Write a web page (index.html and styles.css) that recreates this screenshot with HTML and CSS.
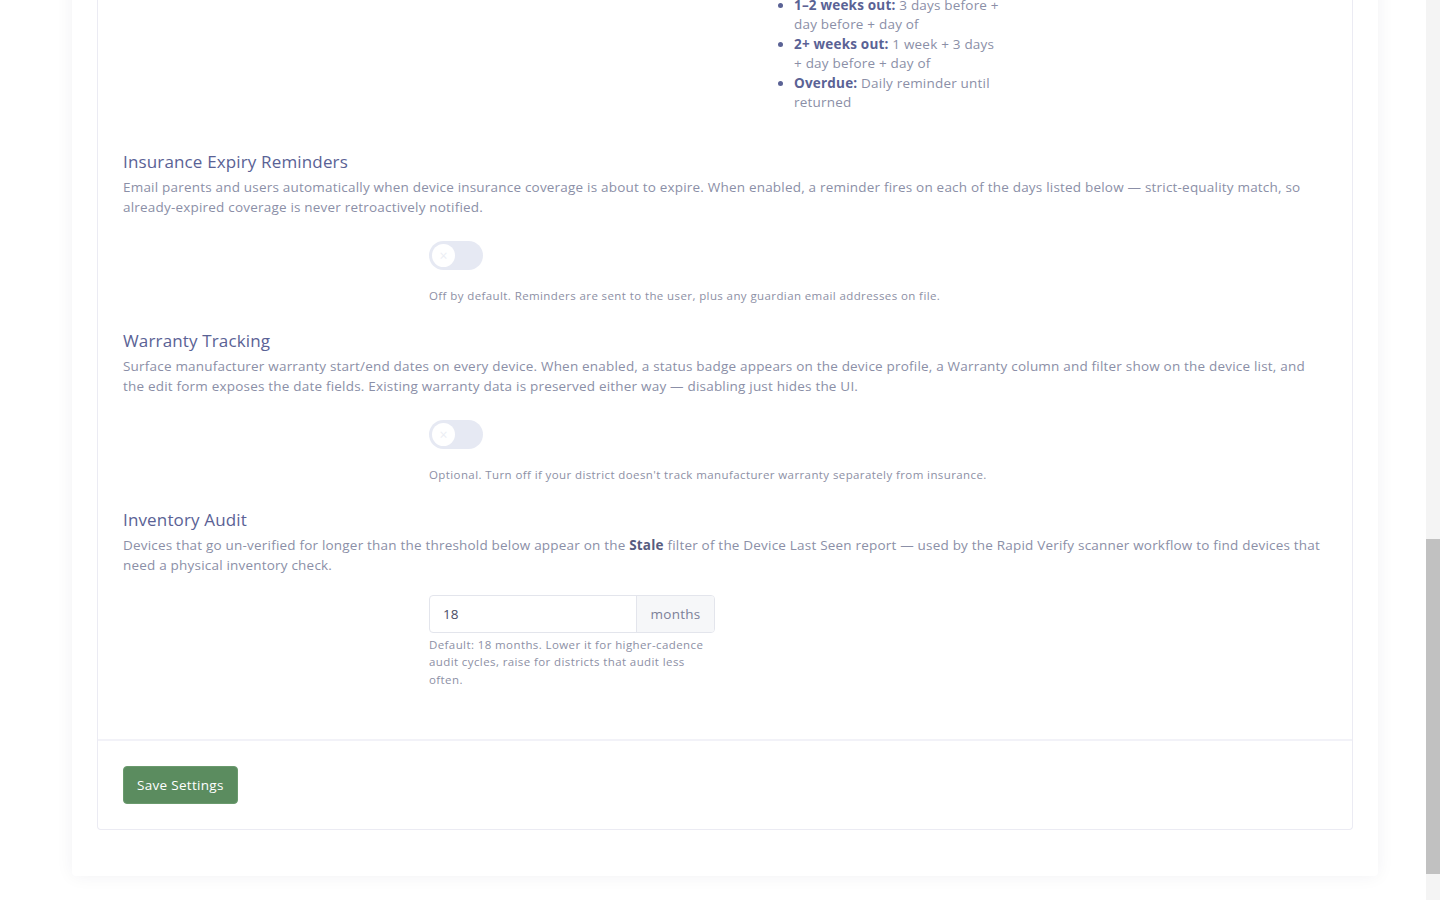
FILE: index.html
```html
<!DOCTYPE html>
<html lang="en">
<head>
<meta charset="utf-8">
<title>Settings</title>
<link rel="stylesheet" href="styles.css">
</head>
<body>
<div class="viewport">
  <div class="outer-card">
    <div class="inner-card">
      <div class="card-body">
        <section class="setting">
          <h3 class="setting-title">Checkout Due Reminders</h3>
          <p class="setting-desc">Email users automatically before a loaner or checkout is due back.</p>
          <div class="field-row">
            <div class="field-spacer"></div>
            <div class="sched-cols">
              <div class="sched-left"></div>
              <ul class="sched-list">
                <li><strong>Same week:</strong> day before + day of</li>
                <li><strong>1–2 weeks out:</strong> 3 days before + day before + day of</li>
                <li><strong>2+ weeks out:</strong> 1 week + 3 days + day before + day of</li>
                <li><strong>Overdue:</strong> Daily reminder until returned</li>
              </ul>
            </div>
          </div>
        </section>

        <section class="setting">
          <h3 class="setting-title">Insurance Expiry Reminders</h3>
          <p class="setting-desc">Email parents and users automatically when device insurance coverage is about to expire. When enabled, a reminder fires on each of the days listed below — strict-equality match, so already-expired coverage is never retroactively notified.</p>
          <div class="field-row">
            <div class="field-spacer"></div>
            <div class="field">
              <span class="toggle"><span class="knob">×</span></span>
              <p class="help">Off by default. Reminders are sent to the user, plus any guardian email addresses on file.</p>
            </div>
          </div>
        </section>

        <section class="setting">
          <h3 class="setting-title">Warranty Tracking</h3>
          <p class="setting-desc">Surface manufacturer warranty start/end dates on every device. When enabled, a status badge appears on the device profile, a Warranty column and filter show on the device list, and the edit form exposes the date fields. Existing warranty data is preserved either way — disabling just hides the UI.</p>
          <div class="field-row">
            <div class="field-spacer"></div>
            <div class="field">
              <span class="toggle"><span class="knob">×</span></span>
              <p class="help">Optional. Turn off if your district doesn't track manufacturer warranty separately from insurance.</p>
            </div>
          </div>
        </section>

        <section class="setting last">
          <h3 class="setting-title">Inventory Audit</h3>
          <p class="setting-desc">Devices that go un-verified for longer than the threshold below appear on the <strong>Stale</strong> filter of the Device Last Seen report — used by the Rapid Verify scanner workflow to find devices that need a physical inventory check.</p>
          <div class="field-row">
            <div class="field-spacer"></div>
            <div class="field narrow">
              <div class="input-group">
                <span class="input">18</span>
                <span class="addon">months</span>
              </div>
              <p class="help multi">Default: 18 months. Lower it for higher-cadence audit cycles, raise for districts that audit less often.</p>
            </div>
          </div>
        </section>
      </div>
      <div class="card-footer">
        <button class="btn-save" type="button">Save Settings</button>
      </div>
    </div>
  </div>
</div>
<div class="scrollbar"><div class="thumb"></div></div>
</body>
</html>
```

FILE: styles.css
```css
* { box-sizing: border-box; }
html, body { margin: 0; padding: 0; }
body {
  background: #ffffff;
  font-family: "Open Sans", "Noto Sans", sans-serif;
  color: #8a8ea6;
  overflow: hidden;
}
.viewport {
  height: 900px;
  width: 1426px;
  overflow: hidden;
  display: flex;
  flex-direction: column;
  justify-content: flex-end;
  padding: 0 48px 24px 72px;
}
.outer-card {
  background: #fff;
  border-radius: 4px;
  box-shadow: 0 0 18px rgba(30, 35, 70, 0.06);
  padding: 0 25px 46px 25px;
}
.inner-card {
  border: 1px solid #ebebf3;
  border-top: none;
  border-radius: 0 0 4px 4px;
  background: #fff;
}
.card-body {
  padding: 0 25px 51px 25px;
}
.setting { margin-bottom: 27px; }
.setting.last { margin-bottom: 0; }
.setting-title {
  margin: 0 0 5px 0;
  font-size: 17px;
  line-height: 20px;
  font-weight: 500;
  letter-spacing: 0.15px;
  color: #5a6295;
}
.setting-desc {
  margin: 0;
  font-size: 13.5px;
  line-height: 20px;
  letter-spacing: 0.2px;
  color: #8b8fa7;
}
.setting-desc strong { color: #575c80; font-weight: 700; }
.field-row {
  display: grid;
  grid-template-columns: 306px 1fr;
  margin-top: 24px;
}
.setting.last .field-row { margin-top: 20px; }
.field { display: flex; flex-direction: column; align-items: flex-start; }
.field.narrow { width: 286px; }
.sched-cols { display: grid; grid-template-columns: 351px 224px; }
.sched-list {
  margin: 0 0 12px 0;
  padding: 0 0 0 14px;
  font-size: 13.5px;
  line-height: 19.5px;
  letter-spacing: 0.2px;
  color: #8b8fa7;
}
.sched-list li::marker { color: #5a6295; }
.sched-list strong { color: #5a6295; font-weight: 700; }
.toggle {
  width: 54px;
  height: 29px;
  border-radius: 15px;
  background: #e6e9f3;
  display: flex;
  align-items: center;
  padding-left: 3px;
}
.knob {
  width: 23px;
  height: 23px;
  border-radius: 50%;
  background: #fff;
  color: #eceef4;
  font-size: 14px;
  line-height: 23px;
  text-align: center;
}
.help {
  margin: 18px 0 0 0;
  font-size: 11.5px;
  line-height: 16px;
  letter-spacing: 0.4px;
  color: #8d90a5;
}
.help.multi { margin-top: 3px; line-height: 17.5px; }
.input-group {
  display: flex;
  width: 286px;
  height: 38px;
  border: 1px solid #e3e5ec;
  border-radius: 4px;
  overflow: hidden;
}
.input {
  flex: 1;
  padding-left: 13px;
  display: flex;
  align-items: center;
  font-size: 13.5px;
  color: #4b4e66;
}
.addon {
  width: 78px;
  display: flex;
  align-items: center;
  justify-content: center;
  background: #f6f7f9;
  border-left: 1px solid #e3e5ec;
  font-size: 13.5px;
  letter-spacing: 0.27px;
  color: #7c8098;
}
.card-footer {
  border-top: 2px solid #f2f2f8;
  padding: 25px 25px 25px 25px;
}
.btn-save {
  font-family: inherit;
  background: #5b8c5f;
  color: #fff;
  border: 1px solid #6a9a6d;
  border-radius: 4px;
  font-size: 13.5px;
  letter-spacing: 0.3px;
  height: 38px;
  padding: 0 13px;
  cursor: pointer;
}
.scrollbar {
  position: fixed;
  top: 0;
  right: 0;
  width: 14px;
  height: 900px;
  background: #f4f4f4;
}
.thumb {
  margin-top: 539px;
  height: 335px;
  background: #c1c1c1;
}
```
